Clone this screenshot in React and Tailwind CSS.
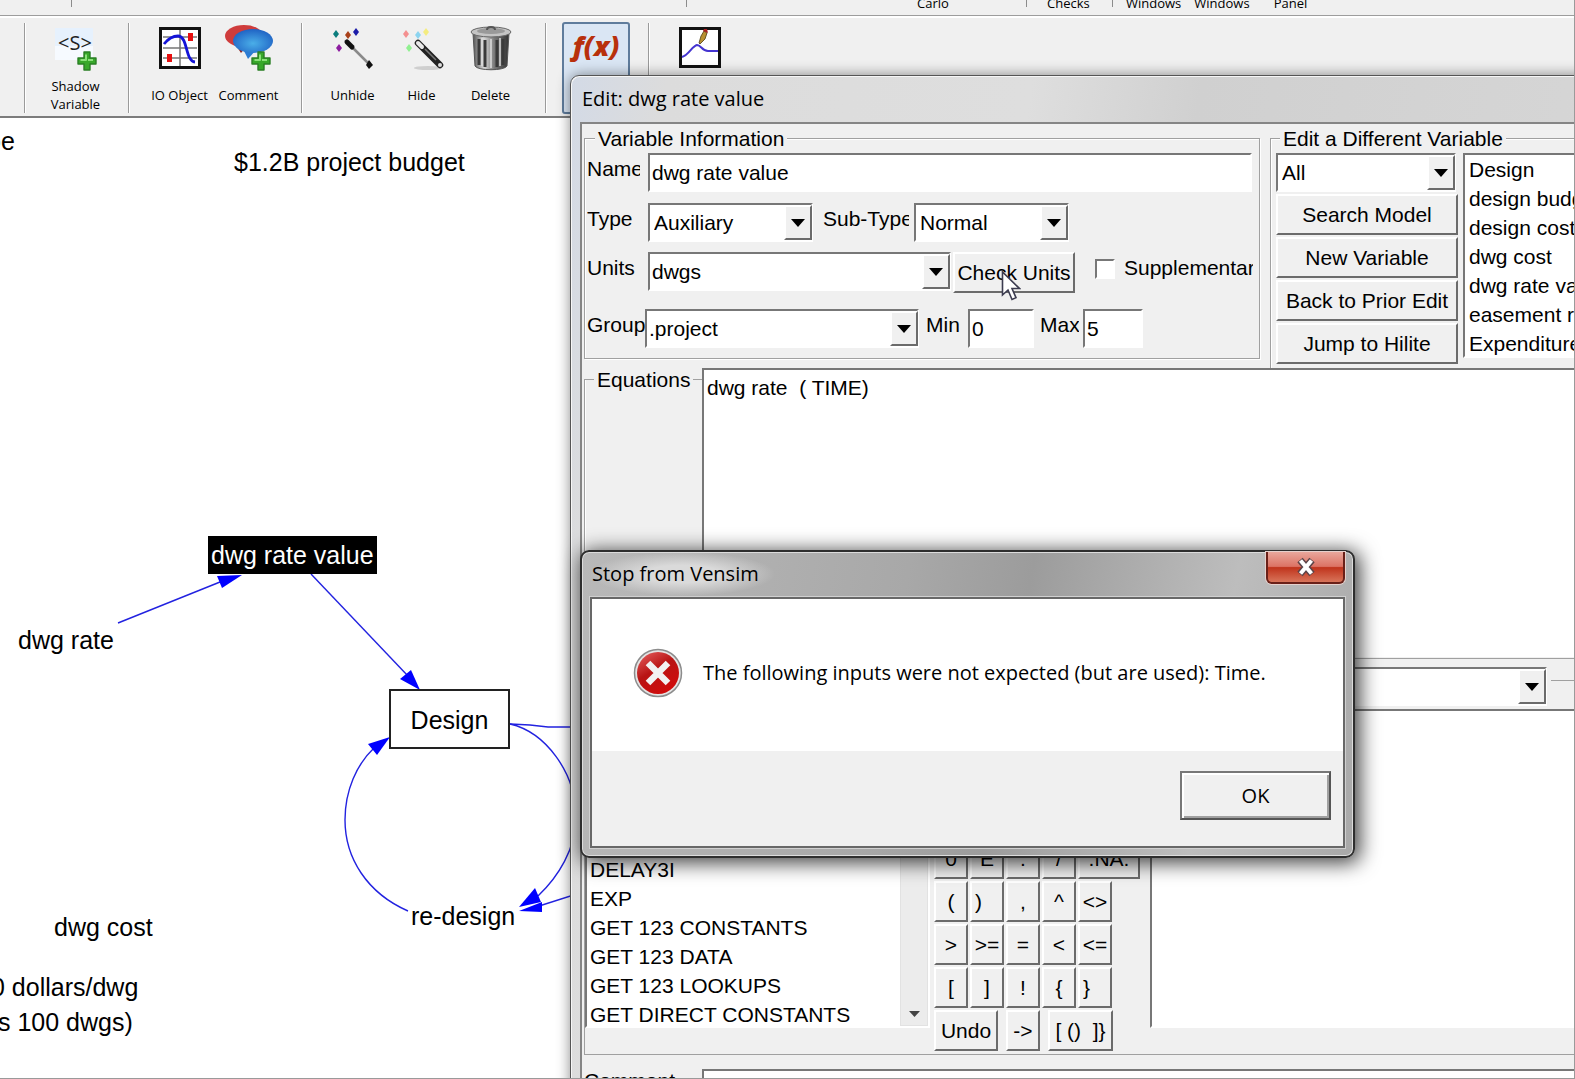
import React from "react";

const sunken =
  "border-2 border-t-[#777] border-l-[#777] border-r-white border-b-white bg-white";
const raised =
  "border-2 border-t-white border-l-white border-r-[#6b6b6b] border-b-[#6b6b6b] bg-[#f0f0f0]";
const groupBox =
  "border border-[#a0a0a0] shadow-[1px_1px_0_#fff,inset_1px_1px_0_#fff]";

const VARIABLES = [
  "Design",
  "design budget",
  "design cost",
  "dwg cost",
  "dwg rate value",
  "easement rate",
  "Expenditures",
];

const FUNCTIONS = [
  "DELAY3I",
  "EXP",
  "GET 123 CONSTANTS",
  "GET 123 DATA",
  "GET 123 LOOKUPS",
  "GET DIRECT CONSTANTS",
];

const KEYS = [
  ["0", "E", ".", "/", ".NA."],
  ["(", ")", ",", "^", "<>"],
  [">", ">=", "=", "<", "<="],
  ["[", "]", "!", "{", "}"],
];

const STRIP = [
  { label: "Carlo", cell: "w-[340px] pl-[230px]" },
  { label: "Checks", cell: "w-[86px] pl-5" },
];

export default function App() {
  return (
    <div className="relative flex flex-col h-screen overflow-hidden bg-white text-black border-r border-b border-[#9a9a9a] font-['Liberation_Sans',Arial,sans-serif]">
      <TopStrip />
      <Toolbar />
      <Canvas />
      <EditWindow />
      <StopDialog />
      <svg
        className="absolute left-[1001px] top-[270px] w-[20px] h-[32px]"
        viewBox="0 0 20 32"
        aria-hidden="true"
      >
        <path
          d="M1.5 2v23l5.5-5 4 9.5 4-1.8-4-9.2h7.500z"
          fill="#fff"
          stroke="#3c3c50"
          strokeWidth="1.6"
        />
      </svg>
    </div>
  );
}

function TopStrip() {
  return (
    <div className="shrink-0 h-[16px] flex items-end overflow-hidden bg-[#f0f0f0] border-b border-[#9d9d9d] font-['Open_Sans','Noto_Sans',sans-serif] text-[13px] leading-[18px]">
      <div className="w-[72px] h-4 pb-2 flex">
        <StripMark />
      </div>
      <div className="w-[615px] h-4 flex">
        <StripMark />
      </div>
      {STRIP.map((s) => (
        <div key={s.label} className={`flex items-end h-4 ${s.cell}`}>
          <span className="pb-[3px]">{s.label}</span>
          <StripMark />
        </div>
      ))}
      <div className="flex gap-[13px] pl-[13px] pb-[3px]">
        <span>Windows</span>
        <span>Windows</span>
        <span className="pl-[11px]">Panel</span>
      </div>
    </div>
  );
}

function StripMark() {
  return <i className="ml-auto self-start w-px h-2 bg-[#8c8c8c]" />;
}

function Toolbar() {
  return (
    <div className="shrink-0 h-[102px] flex pt-[5px] bg-[#f0f0f0] border-t-2 border-t-white border-b-2 border-b-[#7c7c7c] font-['Open_Sans','Noto_Sans',sans-serif]">
      <div className="w-[24px]" />
      <ToolGroup className="pr-[18px]">
        <Tool label="Shadow Variable" icon={<ShadowIcon />} />
      </ToolGroup>
      <ToolGroup className="pr-[18px]">
        <Tool label="IO Object" icon={<IoIcon />} />
        <Tool label="Comment" icon={<CommentIcon />} />
      </ToolGroup>
      <ToolGroup className="pr-5">
        <Tool label="Unhide" icon={<UnhideIcon />} />
        <Tool label="Hide" icon={<HideIcon />} />
        <Tool label="Delete" icon={<TrashIcon />} />
      </ToolGroup>
      <ToolGroup className="pr-[18px]">
        <button
          aria-label="Equations"
          className="-mt-px w-[68px] h-[92px] pt-1 flex justify-center items-start rounded-[3px] border-2 border-[#5f7c9c] bg-[#dae6f4]"
        >
          <span className="font-['Open_Sans',sans-serif] italic font-extrabold text-[27px] leading-[36px] text-[#b8300c]">
            f(x)
          </span>
        </button>
      </ToolGroup>
      <ToolGroup>
        <Tool icon={<GraphIcon />} />
      </ToolGroup>
    </div>
  );
}

function ToolGroup({ className = "", children }) {
  return (
    <div
      className={`flex h-[90px] pl-4 border-l border-[#9a9a9a] shadow-[inset_1px_0_0_#fff] ${className}`}
    >
      {children}
    </div>
  );
}

function Tool({ label, icon }) {
  return (
    <button
      aria-label={label || "Reference"}
      className="w-[69px] flex flex-col items-center text-[13px] leading-[18px]"
    >
      <span className="h-[54px] flex items-start">{icon}</span>
      {label && (
        <span className="flex-1 flex items-center w-[50px] justify-center text-center">
          <span className={label === "Shadow Variable" ? "" : "whitespace-nowrap"}>
            {label}
          </span>
        </span>
      )}
    </button>
  );
}

function Plus() {
  return (
    <g strokeLinejoin="round">
      <path d="M6 0h6v6h6v6h-6v6H6v-6H0V6h6z" fill="#38a82a" stroke="#2a7f24" strokeWidth="1.4" />
      <path d="M8 2.500v5.500H2.500M10 8h5" fill="none" stroke="#8be07a" strokeWidth="2" />
    </g>
  );
}

function ShadowIcon() {
  return (
    <svg width="46" height="50" viewBox="0 0 46 50">
      <rect x="2" y="5" width="38" height="32" fill="#e6f1fd" />
      <rect x="2" y="23" width="38" height="14" fill="#f6faff" />
      <text
        x="22"
        y="27"
        textAnchor="middle"
        fontSize="20"
        fontFamily="Open Sans"
        fill="#222"
      >
        {"<S>"}
      </text>
      <g transform="translate(25 29)">
        <Plus />
      </g>
    </svg>
  );
}

function IoIcon() {
  return (
    <svg width="44" height="48" viewBox="0 0 44 48">
      <rect x="2.500" y="5.500" width="39" height="39" fill="#fff" stroke="#111" strokeWidth="3" />
      <path d="M5 14h34M5 25h34M5 35h34M22 7v36" stroke="#777" strokeWidth="1.500" />
      <path
        d="M6 21C10 16 14 13 20 13c10 0 7 25 17 26"
        fill="none"
        stroke="#1414d8"
        strokeWidth="2.800"
      />
      <rect x="30" y="10" width="5" height="8" fill="#e81010" />
      <rect x="9" y="31" width="5" height="8" fill="#e81010" />
    </svg>
  );
}

function CommentIcon() {
  return (
    <svg width="52" height="48" viewBox="0 0 52 48">
      <defs>
        <radialGradient id="bubble" cx="0.5" cy="0.6" r="0.6">
          <stop offset="0" stopColor="#4aaee8" />
          <stop offset="1" stopColor="#1f62c4" />
        </radialGradient>
      </defs>
      <path d="M14 24l4 6 4-5z" fill="#8c2626" />
      <ellipse cx="21" cy="13" rx="19" ry="11" fill="#cf3c3c" />
      <path d="M20 26l5 10 9-10z" fill="#2c7cd4" />
      <ellipse cx="30" cy="18" rx="20" ry="12" fill="url(#bubble)" />
      <g transform="translate(29 29)">
        <Plus />
      </g>
    </svg>
  );
}

function Spark({ x, y, fill }) {
  return <path transform={`translate(${x} ${y})`} d="M0-4L3 0 0 4-3 0z" fill={fill} />;
}

function UnhideIcon() {
  return (
    <svg width="44" height="48" viewBox="0 0 44 48">
      <Spark x={5} y={11} fill="#0b7d7d" />
      <Spark x={17} y={12} fill="#a8401a" />
      <Spark x={25} y={9} fill="#1c1ca8" />
      <Spark x={8} y={25} fill="#8c1ca0" />
      <path d="M19 22L38 41" stroke="#8a8a8a" strokeWidth="2.500" />
      <path d="M16 19l5 5" stroke="#111" strokeWidth="5" strokeLinecap="round" />
      <path d="M38 37l4 5-4 4-3-4z" fill="#111" />
    </svg>
  );
}

function HideIcon() {
  return (
    <svg width="44" height="48" viewBox="0 0 44 48">
      <ellipse cx="28" cy="45" rx="14" ry="2" fill="#cfcfcf" />
      <Spark x={6} y={11} fill="#f49090" />
      <Spark x={18} y={12} fill="#8cd4f0" />
      <Spark x={26} y={9} fill="#f4ec80" />
      <Spark x={9} y={25} fill="#90f090" />
      <path d="M18 20L40 42" stroke="#222" strokeWidth="6.500" strokeLinecap="round" />
      <path d="M18 20l4 4" stroke="#e8e8e8" strokeWidth="4" strokeLinecap="round" />
      <path d="M25 26L36 37" stroke="#777" strokeWidth="1.500" />
      <circle cx="40" cy="42" r="2" fill="#ddd" />
    </svg>
  );
}

function TrashIcon() {
  return (
    <svg width="44" height="48" viewBox="0 0 44 48">
      <defs>
        <linearGradient id="can">
          <stop offset="0" stopColor="#555" />
          <stop offset="0.3" stopColor="#d8d8d8" />
          <stop offset="0.6" stopColor="#777" />
          <stop offset="1" stopColor="#333" />
        </linearGradient>
      </defs>
      <path d="M4 10l2 33c3 5 29 5 32 0l2-33z" fill="url(#can)" stroke="#555" />
      <path
        d="M10 16v26M16 17v27M28 17v27M34 16v26"
        stroke="#3a3a3a"
        strokeWidth="3"
      />
      <path d="M22 16v29M13 15v28M31 15v28" stroke="#ddd" strokeWidth="1.500" />
      <ellipse cx="22" cy="9" rx="20" ry="5" fill="#c4c4c4" stroke="#666" />
      <ellipse cx="22" cy="8" rx="14" ry="3" fill="#999" />
      <path d="M18 7c0-4 8-4 8 0" fill="none" stroke="#555" strokeWidth="2" />
    </svg>
  );
}

function GraphIcon() {
  return (
    <svg width="44" height="48" viewBox="0 0 44 48">
      <rect x="2.500" y="5.500" width="39" height="38" fill="#fff" stroke="#111" strokeWidth="3" />
      <path
        d="M4 34c7-2 10-11 15-12 4 0 5 6 11 6h10"
        fill="none"
        stroke="#4434d0"
        strokeWidth="2"
      />
      <path d="M21 20l2-7 3-5 3 2-2 6-5 5z" fill="#b89030" stroke="#4c3c10" strokeWidth="0.800" />
      <path d="M25 8l1-2 3 0 1 4z" fill="#a82020" />
    </svg>
  );
}

function Node({ className, children }) {
  return (
    <div className={`absolute whitespace-nowrap text-[25px] leading-[30px] ${className}`}>
      {children}
    </div>
  );
}

function Canvas() {
  return (
    <div className="relative flex-1 overflow-hidden bg-white">
      <svg className="absolute left-0 top-0" width="580" height="961" viewBox="0 118 580 961">
        <g fill="none" stroke="#2222e0" strokeWidth="1.400">
          <path d="M118 623L220 582" />
          <path d="M311 574L408 676" />
          <path d="M510 724l20 1 18 2h32" />
          <path d="M510 724c35 8 66 48 66 93 0 32-18 60-38 79" />
          <path d="M580 893L536 907" />
          <path d="M408 911C367 893 345 858 345 820c0-30 12-56 29-72" />
        </g>
        <g fill="#0000ff">
          <path d="M242 575l-25 1 5 12z" />
          <path d="M420 690l-9-20-11 9z" />
          <path d="M390 737l-22 7 9 11z" />
          <path d="M519 907l16-19 6 14z" />
          <path d="M519 911l23-9v10z" />
        </g>
      </svg>
      <Node className="left-[-13px] top-[8px]">pe</Node>
      <Node className="left-[234px] top-[29px]">$1.2B project budget</Node>
      <Node className="left-[208px] top-[418px] px-[3px] py-1 bg-black text-white">
        dwg rate value
      </Node>
      <Node className="left-[18px] top-[507px]">dwg rate</Node>
      <Node className="left-[389px] top-[571px] w-[121px] h-[60px] pt-[14px] text-center border-2 border-[#222]">
        Design
      </Node>
      <Node className="left-[411px] top-[783px]">re-design</Node>
      <Node className="left-[54px] top-[794px]">dwg cost</Node>
      <Node className="left-[-9px] top-[854px]">0 dollars/dwg</Node>
      <Node className="left-[-2px] top-[889px]">s 100 dwgs)</Node>
    </div>
  );
}

function Combo({ id, options, className, label, pad = "pl-1" }) {
  return (
    <div className={`relative shrink-0 h-[39px] ${className}`}>
      <select
        id={id}
        aria-label={label}
        className={`appearance-none w-full h-full rounded-none ${pad} ${sunken}`}
      >
        {options.map((o) => (
          <option key={o}>{o}</option>
        ))}
      </select>
      <span
        className={`absolute right-px top-[2px] bottom-[2px] w-[28px] flex items-center justify-center pointer-events-none ${raised}`}
      >
        <svg width="14" height="8" viewBox="0 0 14 8">
          <path d="M0 0h14L7 8z" />
        </svg>
      </span>
    </div>
  );
}

function Label({ htmlFor, className, children }) {
  return (
    <label
      htmlFor={htmlFor}
      className={`shrink-0 overflow-hidden whitespace-nowrap leading-[32px] ${className}`}
    >
      {children}
    </label>
  );
}

function VariableInformation() {
  return (
    <fieldset className={`shrink-0 w-[676px] h-[233px] pl-[2px] ${groupBox}`}>
      <legend className="ml-[8px] px-[3px] h-[24px] leading-[26px] bg-[#f0f0f0]">
        Variable Information
      </legend>
      <div className="flex items-start mt-[3px]">
        <Label htmlFor="name" className="w-[53px] mr-2">
          Name
        </Label>
        <input
          id="name"
          defaultValue="dwg rate value"
          className={`flex-1 mr-[7px] h-[39px] px-[2px] ${sunken}`}
        />
      </div>
      <div className="flex items-start mt-[11px]">
        <Label htmlFor="type" className="w-[53px] mr-2">
          Type
        </Label>
        <Combo id="type" options={["Auxiliary"]} className="w-[165px] mr-[10px]" />
        <Label htmlFor="subtype" className="w-[86px] mr-[5px]">
          Sub-Type
        </Label>
        <Combo id="subtype" options={["Normal"]} className="w-[155px]" />
      </div>
      <div className="flex items-start h-[39px] mt-[10px]">
        <Label htmlFor="units" className="w-[53px] mr-2">
          Units
        </Label>
        <Combo id="units" options={["dwgs"]} pad="pl-[2px]" className="w-[303px] mr-[2px]" />
        <button className={`shrink-0 w-[122px] h-[41px] whitespace-nowrap ${raised}`}>
          Check Units
        </button>
        <input
          id="supp"
          type="checkbox"
          className={`shrink-0 appearance-none w-[20px] h-[20px] ml-5 mt-[7px] mr-[9px] ${sunken}`}
        />
        <Label htmlFor="supp" className="w-[129px]">
          Supplementary
        </Label>
      </div>
      <div className="flex items-start mt-[18px]">
        <Label htmlFor="group" className="w-[58px]">
          Group
        </Label>
        <Combo id="group" options={[".project"]} pad="pl-[2px]" className="w-[274px] mr-[7px]" />
        <Label htmlFor="min" className="w-[36px] mr-[6px]">
          Min
        </Label>
        <input
          id="min"
          defaultValue="0"
          className={`w-[66px] h-[39px] px-[2px] mr-[6px] ${sunken}`}
        />
        <Label htmlFor="max" className="w-[39px] mr-1">
          Max
        </Label>
        <input
          id="max"
          defaultValue="5"
          className={`w-[60px] h-[39px] px-[2px] ${sunken}`}
        />
      </div>
    </fieldset>
  );
}

function DifferentVariable() {
  return (
    <fieldset className={`flex-1 min-w-0 h-[243px] pl-[5px] ${groupBox}`}>
      <legend className="ml-[4px] px-[3px] h-[24px] leading-[26px] bg-[#f0f0f0]">
        Edit a Different Variable
      </legend>
      <div className="flex mt-[3px]">
        <div className="shrink-0 w-[182px] mr-[5px] flex flex-col gap-[2px]">
          <Combo label="Variable filter" options={["All"]} className="w-[180px]" />
          {["Search Model", "New Variable", "Back to Prior Edit", "Jump to Hilite"].map(
            (b) => (
              <button key={b} className={`h-[41px] whitespace-nowrap ${raised}`}>
                {b}
              </button>
            )
          )}
        </div>
        <ul
          className={`flex-1 h-[205px] pl-1 overflow-hidden whitespace-nowrap leading-[29px] ${sunken}`}
        >
          {VARIABLES.map((v) => (
            <li key={v}>{v}</li>
          ))}
        </ul>
      </div>
    </fieldset>
  );
}

function Keypad() {
  return (
    <div className="shrink-0 w-[220px] pl-1 flex flex-col justify-end gap-[2px]">
      {KEYS.map((row) => (
        <div key={row[0]} className="flex gap-[2px]">
          {row.map((k) => (
            <button
              key={k}
              className={`h-[41px] ${k === ".NA." ? "w-[62px]" : "w-[34px]"} ${
                k === ")" || k === "}" ? "text-left pl-[3px]" : ""
              } ${raised}`}
            >
              {k}
            </button>
          ))}
        </div>
      ))}
      <div className="flex gap-2">
        <button className={`w-[64px] h-[41px] ${raised}`}>Undo</button>
        <button className={`w-[34px] h-[41px] ${raised}`}>{"->"}</button>
        <button className={`w-[65px] h-[41px] whitespace-pre ${raised}`}>
          {"[ ()  ]}"}
        </button>
      </div>
    </div>
  );
}

function EditWindow() {
  return (
    <section className="absolute left-[570px] top-[75px] -right-8 -bottom-8 flex flex-col pl-[9px] rounded-tl-[9px] border border-[#555] bg-[linear-gradient(100deg,#d3dae6_0,#dcdcdc_8%,#dedede_38%,#d0d0d0_52%,#d8d8d8_100%)] shadow-[inset_1px_1px_0_#f6f6f6,0_0_14px_rgba(0,0,0,0.45)]">
      <h1 className="shrink-0 h-[46px] pl-[2px] font-['Open_Sans','Noto_Sans',sans-serif] text-[20px] leading-[46px]">
        Edit: dwg rate value
      </h1>
      <div className="flex-1 flex flex-col pl-[2px] border-2 border-[#858585] bg-[#f0f0f0] text-[21px]">
        <div className="shrink-0 h-[244px] flex gap-[10px] pt-[2px]">
          <VariableInformation />
          <DifferentVariable />
        </div>
        <div className="shrink-0 h-[291px] flex border-b border-[#a0a0a0]">
          <fieldset className="w-[118px] border-t border-l border-[#a0a0a0] shadow-[inset_1px_0_0_#fff]">
            <legend className="ml-[9px] px-[3px] h-[22px] leading-[24px]">Equations</legend>
          </fieldset>
          <textarea
            aria-label="Equations"
            defaultValue="dwg rate  ( TIME)"
            className={`flex-1 h-[289px] pt-[3px] pl-[3px] leading-[29px] resize-none ${sunken}`}
          />
        </div>
        <div className="shrink-0 h-[396px] flex flex-col border-b border-l border-[#a0a0a0]">
          <div className="shrink-0 h-[50px] pt-2 flex">
            <Combo label="Variable list" options={[""]} className="ml-[570px] w-[392px]" />
            <i className="flex-1 h-px mt-[13px] ml-1 bg-[#a0a0a0]" />
          </div>
          <div className="flex">
            <div className={`shrink-0 w-[345px] h-[319px] flex ${sunken}`}>
              <ul className="flex-1 pt-[144px] pl-[3px] overflow-hidden whitespace-nowrap leading-[29px]">
                {FUNCTIONS.map((f) => (
                  <li key={f}>{f}</li>
                ))}
              </ul>
              <div className="w-[28px] pb-2 flex items-end justify-center bg-[#ececec] border border-[#e2e2e2]">
                <svg width="11" height="6" viewBox="0 0 11 6">
                  <path d="M0 0h11L5.500 6z" fill="#444" />
                </svg>
              </div>
            </div>
            <div className="flex h-[341px] mt-px">
              <Keypad />
            </div>
            <ul aria-label="Variables" className={`flex-1 h-[319px] ${sunken}`} />
          </div>
        </div>
        <div className="flex pt-[14px]">
          <label htmlFor="comment" className="w-[118px] leading-[24px]">
            Comment
          </label>
          <textarea id="comment" className={`flex-1 h-[40px] resize-none ${sunken}`} />
        </div>
      </div>
    </section>
  );
}

function StopDialog() {
  return (
    <section
      role="alertdialog"
      aria-labelledby="stop-title"
      className="absolute left-[580px] top-[550px] w-[775px] h-[308px] flex flex-col px-[8px] pb-[8px] rounded-[9px] border-2 border-[#2e2e2e] bg-[linear-gradient(100deg,#b9b9b9_0,#a8a8a8_40%,#9c9c9c_55%,#bdbdbd_80%,#a9a9a9_100%)] shadow-[inset_0_0_0_1px_#dcdcdc,3px_3px_20px_2px_rgba(0,0,0,0.75)] font-['Open_Sans','Noto_Sans',sans-serif] text-[20px]"
    >
      <div className="shrink-0 h-[45px] flex items-start justify-between">
        <h2
          id="stop-title"
          className="pl-[2px] pr-4 leading-[44px] bg-[radial-gradient(closest-side,#dadada_40%,transparent)]"
        >
          Stop from Vensim
        </h2>
        <button
          aria-label="Close"
          className="w-[79px] h-[32px] flex items-center justify-center rounded-b-[6px] border-2 border-t-0 border-[#6a2018] bg-[linear-gradient(#e9a79c_0,#dc7364_48%,#c0341c_52%,#d8745a_100%)] shadow-[0_0_0_1px_#e6d0cc]"
        >
          <svg width="22" height="20" viewBox="0 0 22 20">
            <path d="M5 3l12 14M17 3L5 17" stroke="#5c4448" strokeWidth="7" />
            <path d="M5.500 3.500l11 13M16.500 3.500l-11 13" stroke="#fff" strokeWidth="4" />
          </svg>
        </button>
      </div>
      <div className="flex-1 flex flex-col border-2 border-[#686868] shadow-[0_0_0_1px_#d0d0d0] bg-[#f0f0f0]">
        <div className="h-[152px] flex items-center pl-[41px] pb-1 bg-white">
          <svg width="50" height="50" viewBox="0 0 50 50" className="shrink-0">
            <defs>
              <linearGradient id="stop" x1="0" y1="0" x2="0.6" y2="1">
                <stop offset="0" stopColor="#e86464" />
                <stop offset="0.5" stopColor="#b81414" />
                <stop offset="1" stopColor="#d00c0c" />
              </linearGradient>
            </defs>
            <circle cx="25" cy="25" r="23.500" fill="#e4e4e4" stroke="#8c8c8c" strokeWidth="1.500" />
            <circle cx="25" cy="25" r="21" fill="url(#stop)" />
            <path d="M15 15l20 20M35 15L15 35" stroke="#f2f2f2" strokeWidth="6.500" />
          </svg>
          <p className="pl-5 whitespace-nowrap">
            The following inputs were not expected (but are used): Time.
          </p>
        </div>
        <div className="flex justify-end pt-5 pr-3">
          <button className="w-[151px] h-[49px] border-2 border-t-[#777] border-l-[#777] border-r-[#555] border-b-[#555] bg-[#f0f0f0] shadow-[inset_2px_2px_0_#fff,inset_-2px_-2px_0_#a0a0a0]">
            OK
          </button>
        </div>
      </div>
    </section>
  );
}
